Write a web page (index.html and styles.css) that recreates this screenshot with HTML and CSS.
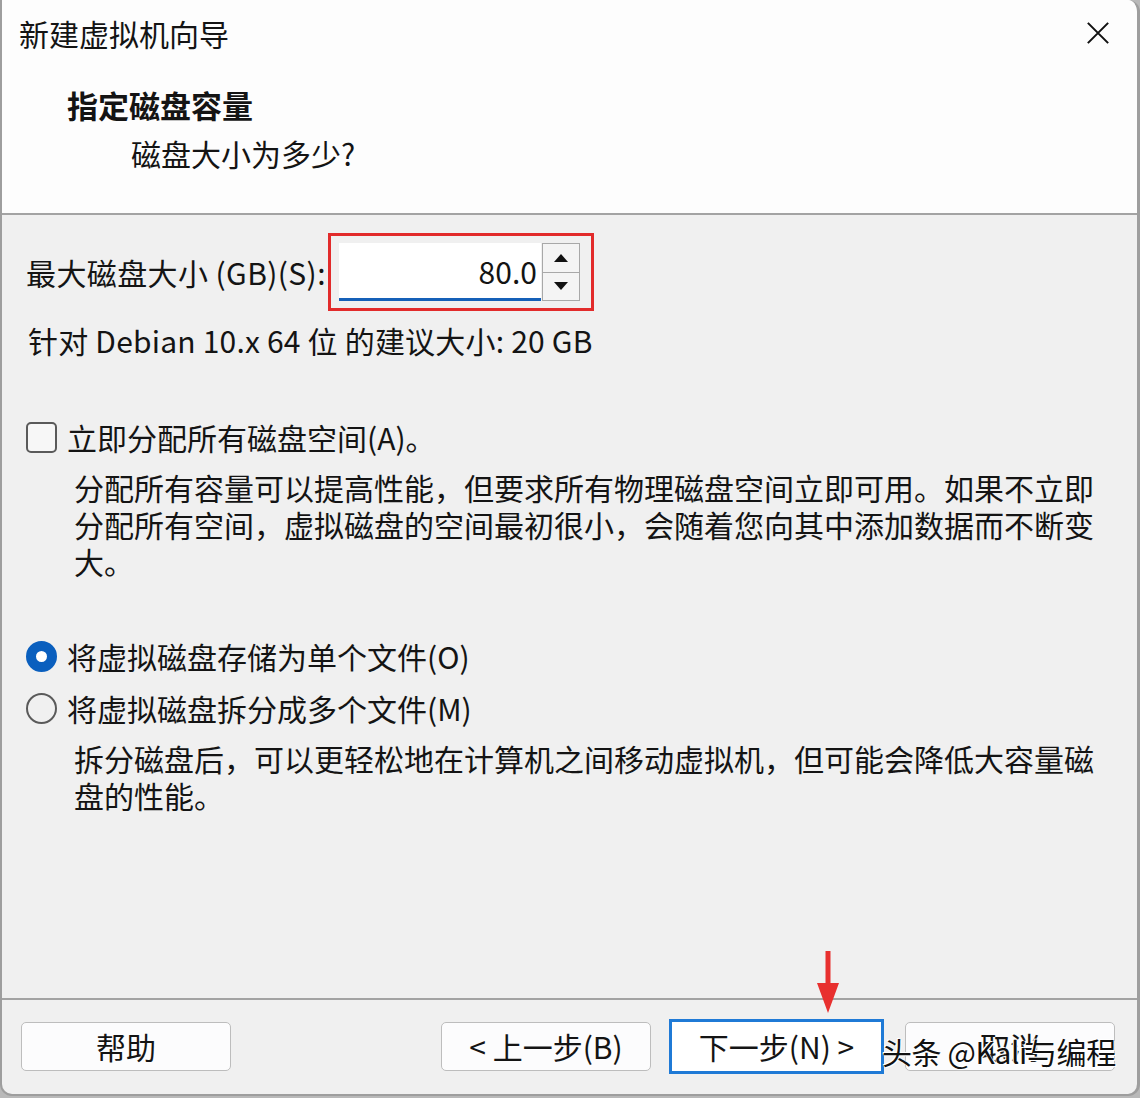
FILE: index.html
```html
<!DOCTYPE html>
<html lang="zh-CN">
<head>
<meta charset="utf-8">
<title>新建虚拟机向导</title>
<link rel="stylesheet" href="styles.css">
</head>
<body>
<div class="window">
  <header class="head">
    <div class="titlebar">
      <span class="title">新建虚拟机向导</span>
      <svg class="close" width="26" height="26" viewBox="0 0 26 26"><path d="M2 2 L24 24 M24 2 L2 24" stroke="#111" stroke-width="2.2" fill="none"/></svg>
    </div>
    <h1 class="h-title">指定磁盘容量</h1>
    <p class="h-sub">磁盘大小为多少?</p>
  </header>
  <main class="content">
    <div class="size-row">
      <span class="label">最大磁盘大小 (GB)(S):</span>
      <div class="mark">
        <div class="spin-input">80.0</div>
        <div class="spin-btns">
          <span class="sb"><svg width="14" height="8" viewBox="0 0 14 8"><path d="M7 0 L14 8 L0 8 Z" fill="#111"/></svg></span>
          <span class="sb"><svg width="14" height="8" viewBox="0 0 14 8"><path d="M0 0 L14 0 L7 8 Z" fill="#111"/></svg></span>
        </div>
      </div>
    </div>
    <p class="hint">针对 Debian 10.x 64 位 的建议大小: 20 GB</p>
    <div class="opt check-row"><span class="checkbox"></span><span>立即分配所有磁盘空间(A)。</span></div>
    <p class="desc">分配所有容量可以提高性能，但要求所有物理磁盘空间立即可用。如果不立即<br>分配所有空间，虚拟磁盘的空间最初很小，会随着您向其中添加数据而不断变<br>大。</p>
    <div class="opt radio-row first"><span class="radio on"></span><span>将虚拟磁盘存储为单个文件(O)</span></div>
    <div class="opt radio-row"><span class="radio"></span><span>将虚拟磁盘拆分成多个文件(M)</span></div>
    <p class="desc">拆分磁盘后，可以更轻松地在计算机之间移动虚拟机，但可能会降低大容量磁<br>盘的性能。</p>
  </main>
  <footer class="foot">
    <button class="btn help">帮助</button>
    <div class="nav">
      <button class="btn">&lt; 上一步(B)</button>
      <button class="btn focus">下一步(N) &gt;</button>
      <button class="btn cancel">取消</button>
    </div>
  </footer>
  <svg class="arrow" width="26" height="64" viewBox="0 0 26 64"><path d="M10.5 0 H15.5 V32 H24 L13 62 L2 32 H10.5 Z" fill="#e8302f"/></svg>
  <div class="watermark">头条 @Kali与编程</div>
</div>
</body>
</html>
```

FILE: styles.css
```css
* { box-sizing: border-box; }
html, body { margin: 0; padding: 0; }
body {
  background: #b9b9b9;
  font-family: "Noto Sans CJK SC", "Microsoft YaHei", sans-serif;
  color: #141414;
}
.window {
  position: relative;
  width: 1140px;
  height: 1096px;
  display: flex;
  flex-direction: column;
  background: #f0f0f0;
  border: 2px solid #9e9e9e;
  border-top: 0;
  border-right-width: 3px;
  border-radius: 0 12px 12px 12px;
  overflow: hidden;
}
.head {
  height: 215px;
  flex: none;
  background: #fdfdfd;
  border-bottom: 2px solid #a3a3a3;
  padding: 13px 0 0 0;
}
.titlebar {
  display: flex;
  align-items: center;
  justify-content: space-between;
  padding: 0 27px 0 17px;
  height: 40px;
}
.title { font-size: 30px; line-height: 40px; }
.close { width: 24px; height: 24px; }
.h-title {
  margin: 34px 0 0 65px;
  font-size: 31px;
  line-height: 36px;
  font-weight: 700;
}
.h-sub {
  margin: 12px 0 0 129px;
  font-size: 30px;
  line-height: 36px;
}
.content {
  flex: 1;
  padding: 18px 0 0 24px;
  font-size: 30px;
}
.size-row {
  display: flex;
  align-items: center;
  height: 78px;
}
.label { line-height: 37px; margin-right: 2px; white-space: nowrap; letter-spacing: 0.4px; }
.mark {
  display: flex;
  align-items: stretch;
  width: 266px;
  height: 78px;
  border: 3px solid #e22b2b;
  padding: 7px 11px 7px 8px;
}
.spin-input {
  flex: 1;
  background: #fff;
  text-align: right;
  padding-right: 4px;
  font-size: 30px;
  line-height: 56px;
  border-bottom: 3px solid #1560b8;
}
.spin-btns {
  width: 38px;
  display: flex;
  flex-direction: column;
  border: 1px solid #a8a8a8;
  margin-left: 1px;
}
.sb {
  flex: 1;
  display: flex;
  align-items: center;
  justify-content: center;
  background: #f4f4f4;
}
.sb + .sb { border-top: 1px solid #a8a8a8; }
.hint {
  margin: 11px 0 0 2px;
  line-height: 37px;
  white-space: nowrap;
  letter-spacing: 0.2px;
}
.opt {
  display: flex;
  align-items: center;
  gap: 10px;
  line-height: 37px;
  white-space: nowrap;
}
.check-row { margin-top: 60px; }
.checkbox {
  width: 31px;
  height: 31px;
  border: 2px solid #5a5a5a;
  border-radius: 5px;
  background: #f7f7f7;
  flex: none;
}
.desc {
  margin: 13px 0 0 48px;
  font-size: 30px;
  line-height: 37px;
  white-space: nowrap;
}
.radio-row.first { margin-top: 58px; }
.radio-row + .radio-row { margin-top: 15px; }
.radio {
  width: 31px;
  height: 31px;
  border-radius: 50%;
  border: 2px solid #5a5a5a;
  flex: none;
}
.radio.on {
  border: 10px solid #0a5fbe;
  background: #fff;
}
.foot {
  flex: none;
  height: 96px;
  border-top: 2px solid #a3a3a3;
  display: flex;
  align-items: flex-start;
  justify-content: space-between;
  padding: 22px 22px 0 19px;
}
.nav { display: flex; align-items: center; margin-top: -3px; }
.btn {
  width: 210px;
  height: 49px;
  border: 1px solid #bdbdbd;
  border-radius: 5px;
  background: #fcfcfd;
  font-family: inherit;
  font-size: 30px;
  line-height: 45px;
  color: #141414;
  padding: 0;
}
.nav .btn { margin-left: 18px; }
.nav .btn:first-child { margin-left: 0; }
.btn.focus {
  width: 215px;
  height: 55px;
  border: 3px solid #1f7ad6;
  border-radius: 0;
  background: #fff;
}
.nav .btn.cancel { margin-left: 21px; }
.arrow {
  position: absolute;
  left: 813px;
  top: 951px;
}
.watermark {
  position: absolute;
  left: 880px;
  top: 1031px;
  font-size: 30px;
  line-height: 40px;
  letter-spacing: -0.4px;
  color: #111;
  text-shadow: 0 0 2px #fff, 1px 1px 0 #fff, -1px -1px 0 #fff;
}
```
